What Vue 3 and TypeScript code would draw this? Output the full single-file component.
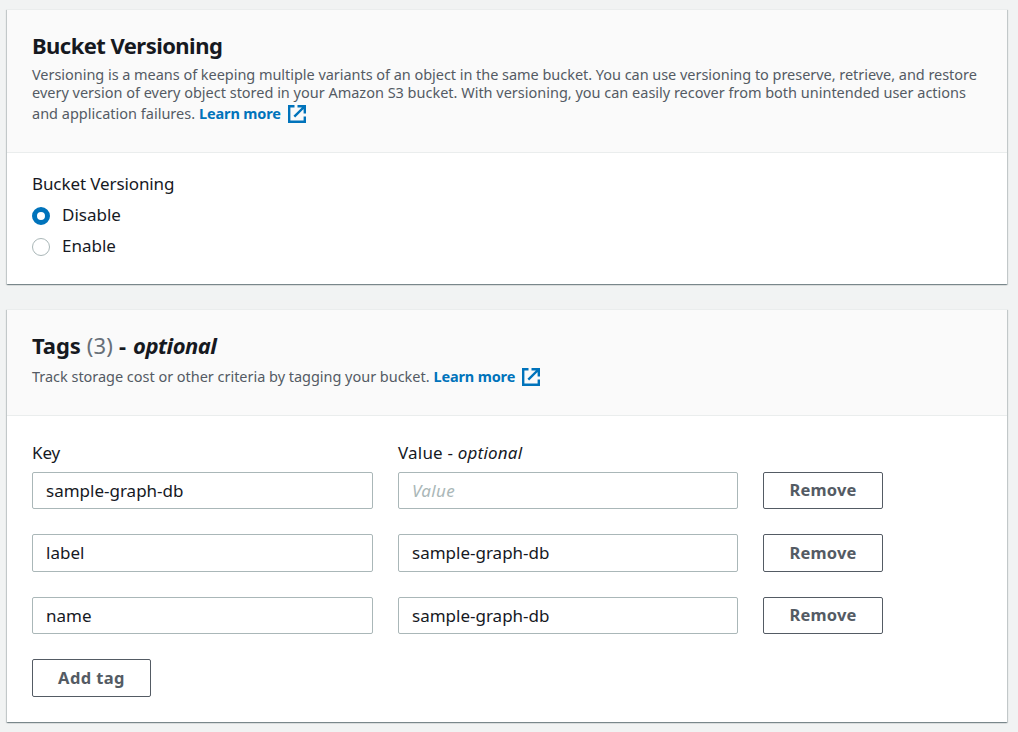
<script setup lang="ts">
import { ref } from 'vue'

interface Tag {
  key: string
  value: string
}

const versioning = ref<'Disable' | 'Enable'>('Disable')
const options = ['Disable', 'Enable'] as const
const tags = ref<Tag[]>([
  { key: 'sample-graph-db', value: '' },
  { key: 'label', value: 'sample-graph-db' },
  { key: 'name', value: 'sample-graph-db' },
])

function addTag() {
  tags.value.push({ key: '', value: '' })
}

function removeTag(index: number) {
  tags.value.splice(index, 1)
}
</script>

<template>
  <main class="page">
    <section class="card versioning">
      <header class="card-header">
        <h2><span class="t-versioning">Bucket Versioning</span></h2>
        <p class="desc">
          <span class="line l1">Versioning is a means of keeping multiple variants of an object in the same bucket. You can use versioning to preserve, retrieve, and restore</span>
          <span class="line l2">every version of every object stored in your Amazon S3 bucket. With versioning, you can easily recover from both unintended user actions</span>
          <span class="line l3"><span class="l3-text">and application failures.</span><a class="link">Learn more</a><svg class="ext" viewBox="0 0 18 18"><path d="M6.5 1.2H1.2v15.6h15.6v-5.3M9.5 1.2h7.3v7.3M16.5 1.5L6.3 11.7" /></svg></span>
        </p>
      </header>
      <div class="card-body">
        <div class="label group-label">Bucket Versioning</div>
        <label v-for="o in options" :key="o" class="radio" @click="versioning = o">
          <span class="dot" :class="{ on: versioning === o }"></span>
          <span class="radio-text">{{ o }}</span>
        </label>
      </div>
    </section>

    <section class="card tags">
      <header class="card-header">
        <h2><span class="t-tags">Tags</span><span class="count">(3)</span><span class="dash">-</span><em class="t-opt">optional</em></h2>
        <p class="desc">
          <span class="line l4"><span class="l4-text">Track storage cost or other criteria by tagging your bucket.</span><a class="link">Learn more</a><svg class="ext" viewBox="0 0 18 18"><path d="M6.5 1.2H1.2v15.6h15.6v-5.3M9.5 1.2h7.3v7.3M16.5 1.5L6.3 11.7" /></svg></span>
        </p>
      </header>
      <div class="card-body">
        <div class="row heads">
          <div class="label">Key</div>
          <div class="label value-label">Value - <em>optional</em></div>
        </div>
        <div class="rows">
          <div v-for="(t, i) in tags" :key="i" class="row">
            <input v-model="t.key" type="text" placeholder="Key" />
            <input v-model="t.value" type="text" placeholder="Value" />
            <button type="button" @click="removeTag(i)">Remove</button>
          </div>
        </div>
        <button type="button" class="add" @click="addTag">Add tag</button>
      </div>
    </section>
  </main>
</template>

<style>
html,
body {
  background: #f1f3f3;
}
</style>

<style scoped>
.page {
  box-sizing: border-box;
  height: 732px;
  padding: 9px 11px 0 7px;
  overflow: hidden;
  background: #f1f3f3;
  color: #16191f;
  font-family: "Noto Sans", "Open Sans", sans-serif;
  display: flex;
  flex-direction: column;
  gap: 25px;
}
.card {
  box-sizing: border-box;
  flex: none;
  background: #fff;
  border-top: 1px solid #eaeded;
  box-shadow: 0 1px 1px 0 rgba(0, 28, 36, 0.3), 1px 1px 1px 0 rgba(0, 28, 36, 0.15), -1px 1px 1px 0 rgba(0, 28, 36, 0.15);
}
.versioning { height: 275px; }
.tags { height: 413px; }
.card-header {
  box-sizing: border-box;
  background: #fafafa;
  border-bottom: 1px solid #eaeded;
  padding: 20px 25px 0;
}
.versioning .card-header { height: 143px; }
.tags .card-header { height: 106px; }
h2 {
  margin: 0;
  height: 30px;
  display: flex;
  font-size: 22px;
  line-height: 30px;
  font-weight: 700;
  white-space: nowrap;
}
.t-versioning { letter-spacing: -0.55px; }
.t-tags { letter-spacing: -0.1px; margin-right: 6px; }
.count { color: #687078; font-weight: 400; letter-spacing: 0.2px; margin-right: 6px; }
.dash { margin-right: 7px; }
.t-opt { letter-spacing: -0.5px; }
.desc {
  margin: 5px 0 0;
  color: #545b64;
  font-size: 14.5px;
}
.tags .desc { margin-top: 4px; }
.line {
  display: flex;
  align-items: center;
  height: 18px;
  white-space: nowrap;
}
.l1 { letter-spacing: -0.04px; }
.l2 { letter-spacing: -0.01px; }
.l3 { height: 24px; }
.l4 { height: 24px; }
.l3-text { letter-spacing: 0; margin-right: 4px; }
.l4-text { letter-spacing: -0.03px; margin-right: 4px; }
.link {
  color: #0073bb;
  font-weight: 700;
  letter-spacing: -0.15px;
  margin-right: 7px;
}
.ext {
  width: 18px;
  height: 18px;
  margin-top: 2px;
  fill: none;
  stroke: #0073bb;
  stroke-width: 2.4;
}
.label {
  height: 25px;
  font-size: 17px;
  line-height: 25px;
  letter-spacing: -0.1px;
  white-space: nowrap;
}
.value-label { letter-spacing: 0.2px; }
.versioning .card-body { padding: 18px 25px 0; }
.group-label { margin-bottom: 3px; }
.radio {
  display: flex;
  align-items: center;
  gap: 12px;
  height: 31px;
  font-size: 17px;
  letter-spacing: 0;
}
.dot {
  box-sizing: border-box;
  width: 18px;
  height: 18px;
  margin-top: 2px;
  border: 1px solid #aab7b8;
  border-radius: 50%;
  background: #fff;
}
.dot.on { border: 5px solid #0073bb; }
.tags .card-body { padding: 24px 25px 0; }
.row {
  display: grid;
  grid-template-columns: 341px 340px 120px;
  column-gap: 25px;
}
.heads { margin-bottom: 6.5px; }
.rows {
  display: flex;
  flex-direction: column;
  gap: 25px;
}
input {
  box-sizing: border-box;
  width: 100%;
  height: 37.5px;
  margin: 0;
  padding: 0 13px;
  border: 1px solid #aab7b8;
  border-radius: 2px;
  background: #fff;
  color: #16191f;
  font: 17px "Noto Sans", "Open Sans", sans-serif;
  letter-spacing: 0;
  outline: none;
}
input::placeholder {
  color: #aab7b8;
  font-style: italic;
  letter-spacing: 0.3px;
  opacity: 1;
}
button {
  box-sizing: border-box;
  height: 37.5px;
  margin: 0;
  padding: 0 0 1.5px;
  border: 1px solid #545b64;
  border-radius: 2px;
  background: #fff;
  color: #545b64;
  font: 700 16.5px "Noto Sans", "Open Sans", sans-serif;
  letter-spacing: 0.15px;
}
.add {
  display: block;
  width: 119px;
  margin-top: 25px;
  letter-spacing: 0.4px;
}
</style>
